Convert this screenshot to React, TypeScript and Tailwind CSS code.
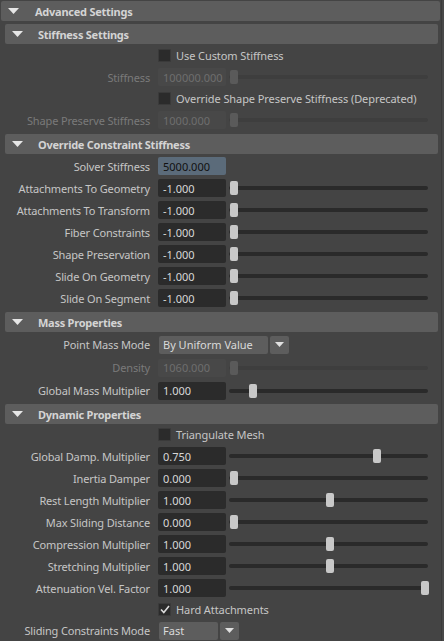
import React from "react";

const font = { fontFamily: '"Noto Sans", "Open Sans", sans-serif' };

function Triangle() {
  return (
    <svg width="11" height="6" viewBox="0 0 11 6" className="shrink-0">
      <polygon points="0,0 11,0 5.5,6" fill="#e6e6e6" />
    </svg>
  );
}

function Header({ title, top }: { title: string; top?: boolean }) {
  return (
    <div className="flex items-center h-[20px] bg-[#5d5d5d] rounded-[2px]">
      <div className={top ? "pl-[7px] w-[34px]" : "pl-[7px] w-[33px]"}>
        <Triangle />
      </div>
      <span className="text-[11px] font-bold text-[#d4d4d4] leading-none tracking-[-0.25px]">{title}</span>
    </div>
  );
}

function Row({ label, disabled, h, children }: { label?: string; disabled?: boolean; h: string; children: React.ReactNode }) {
  return (
    <div className={`flex items-center ${h}`}>
      <div className={`w-[145px] text-right text-[11px] leading-none whitespace-nowrap tracking-[-0.15px] ${disabled ? "text-[#7a7a7a]" : "text-[#c6c6c6]"}`}>
        {label}
      </div>
      <div className="ml-[8px] flex items-center">{children}</div>
    </div>
  );
}

function Field({ value, disabled, blue }: { value: string; disabled?: boolean; blue?: boolean }) {
  const cls = blue
    ? "bg-[#5b6b7a] text-[#111111]"
    : disabled
    ? "bg-[#484848] text-[#6e6e6e]"
    : "bg-[#2b2b2b] text-[#d8d8d8]";
  return (
    <div className={`w-[68px] h-[18px] rounded-[2px] flex items-center pl-[5px] text-[11px] leading-none ${cls}`}>
      {value}
    </div>
  );
}

function Slider({ t, disabled }: { t: number; disabled?: boolean }) {
  return (
    <div className="ml-[3px] w-[199px] h-[14px] relative flex items-center">
      <div className={`w-full h-[4px] rounded-full ${disabled ? "bg-[#3e3e3e]" : "bg-[#2a2a2a]"}`} />
      <div
        className={`absolute top-0 w-[8px] h-[14px] rounded-[2px] ${disabled ? "bg-[#5a5a5a]" : "bg-[#c8c8c8]"}`}
        style={{ left: 1 + t * 191 }}
      />
    </div>
  );
}

function Check({ label, checked }: { label: string; checked?: boolean }) {
  return (
    <div className="flex items-center">
      <div className="w-[13px] h-[13px] bg-[#2b2b2b] rounded-[1px] border border-[#3a3a3a] flex items-center justify-center">
        {checked && (
          <svg width="10" height="9" viewBox="0 0 10 9">
            <polyline points="1,4.5 3.8,7.5 9,1" fill="none" stroke="#dcdcdc" strokeWidth="1.6" />
          </svg>
        )}
      </div>
      <span className="ml-[5px] text-[11px] leading-none text-[#c6c6c6] whitespace-nowrap tracking-[-0.08px]">{label}</span>
    </div>
  );
}

function Dropdown({ value, w }: { value: string; w: string }) {
  return (
    <div className="flex items-center ml-[1px]">
      <div className={`${w} h-[18px] bg-[#5d5d5d] rounded-[2px] flex items-center pl-[4px] text-[11px] leading-none text-[#dadada]`}>
        {value}
      </div>
      <div className="ml-[2px] w-[19px] h-[18px] bg-[#5d5d5d] rounded-[2px] flex items-center justify-center">
        <svg width="9" height="5" viewBox="0 0 9 5">
          <polygon points="0,0 9,0 4.5,5" fill="#e0e0e0" />
        </svg>
      </div>
    </div>
  );
}

export default function App() {
  return (
    <div className="flex w-[444px] min-h-screen bg-[#444444] overflow-hidden" style={font}>
      <div className="w-[441px] pt-[1px] pl-[1px]">
        <div className="pr-[1px]">
          <Header title="Advanced Settings" top />
        </div>
        <div className="pl-[4px] pr-[3px] mt-[3px]">
          {/* Stiffness Settings */}
          <Header title="Stiffness Settings" />
          <Row h="h-[22px]">
            <Check label="Use Custom Stiffness" />
          </Row>
          <Row h="h-[22px]" label="Stiffness" disabled>
            <Field value="100000.000" disabled />
            <Slider t={0} disabled />
          </Row>
          <Row h="h-[21px]">
            <Check label="Override Shape Preserve Stiffness (Deprecated)" />
          </Row>
          <Row h="h-[22px]" label="Shape Preserve Stiffness" disabled>
            <Field value="1000.000" disabled />
            <Slider t={0} disabled />
          </Row>

          {/* Override Constraint Stiffness */}
          <div className="mt-[3px]">
            <Header title="Override Constraint Stiffness" />
          </div>
          <div className="mt-[1px]">
            <Row h="h-[22px]" label="Solver Stiffness">
              <Field value="5000.000" blue />
            </Row>
            <Row h="h-[22px]" label="Attachments To Geometry">
              <Field value="-1.000" />
              <Slider t={0} />
            </Row>
            <Row h="h-[22px]" label="Attachments To Transform">
              <Field value="-1.000" />
              <Slider t={0} />
            </Row>
            <Row h="h-[22px]" label="Fiber Constraints">
              <Field value="-1.000" />
              <Slider t={0} />
            </Row>
            <Row h="h-[22px]" label="Shape Preservation">
              <Field value="-1.000" />
              <Slider t={0} />
            </Row>
            <Row h="h-[22px]" label="Slide On Geometry">
              <Field value="-1.000" />
              <Slider t={0} />
            </Row>
            <Row h="h-[22px]" label="Slide On Segment">
              <Field value="-1.000" />
              <Slider t={0} />
            </Row>
          </div>

          {/* Mass Properties */}
          <div className="mt-[3px]">
            <Header title="Mass Properties" />
          </div>
          <div className="mt-[1px]">
            <Row h="h-[23px]" label="Point Mass Mode">
              <Dropdown value="By Uniform Value" w="w-[109px]" />
            </Row>
            <Row h="h-[23px]" label="Density" disabled>
              <Field value="1060.000" disabled />
              <Slider t={0} disabled />
            </Row>
            <Row h="h-[23px]" label="Global Mass Multiplier">
              <Field value="1.000" />
              <Slider t={0.1} />
            </Row>
          </div>

          {/* Dynamic Properties */}
          <div className="mt-[2px]">
            <Header title="Dynamic Properties" />
          </div>
          <Row h="h-[21px]">
            <Check label="Triangulate Mesh" />
          </Row>
          <Row h="h-[22px]" label="Global Damp. Multiplier">
            <Field value="0.750" />
            <Slider t={0.75} />
          </Row>
          <Row h="h-[22px]" label="Inertia Damper">
            <Field value="0.000" />
            <Slider t={0} />
          </Row>
          <Row h="h-[22px]" label="Rest Length Multiplier">
            <Field value="1.000" />
            <Slider t={0.5} />
          </Row>
          <Row h="h-[22px]" label="Max Sliding Distance">
            <Field value="0.000" />
            <Slider t={0} />
          </Row>
          <Row h="h-[22px]" label="Compression Multiplier">
            <Field value="1.000" />
            <Slider t={0.5} />
          </Row>
          <Row h="h-[22px]" label="Stretching Multiplier">
            <Field value="1.000" />
            <Slider t={0.5} />
          </Row>
          <Row h="h-[22px]" label="Attenuation Vel. Factor">
            <Field value="1.000" />
            <Slider t={1} />
          </Row>
          <Row h="h-[21px]">
            <Check label="Hard Attachments" checked />
          </Row>
          <Row h="h-[21px]" label="Sliding Constraints Mode">
            <Dropdown value="Fast" w="w-[59px]" />
          </Row>
        </div>
      </div>
      <div className="w-[3px] bg-[#484848] border-l border-[#3b3b3b]" />
    </div>
  );
}
